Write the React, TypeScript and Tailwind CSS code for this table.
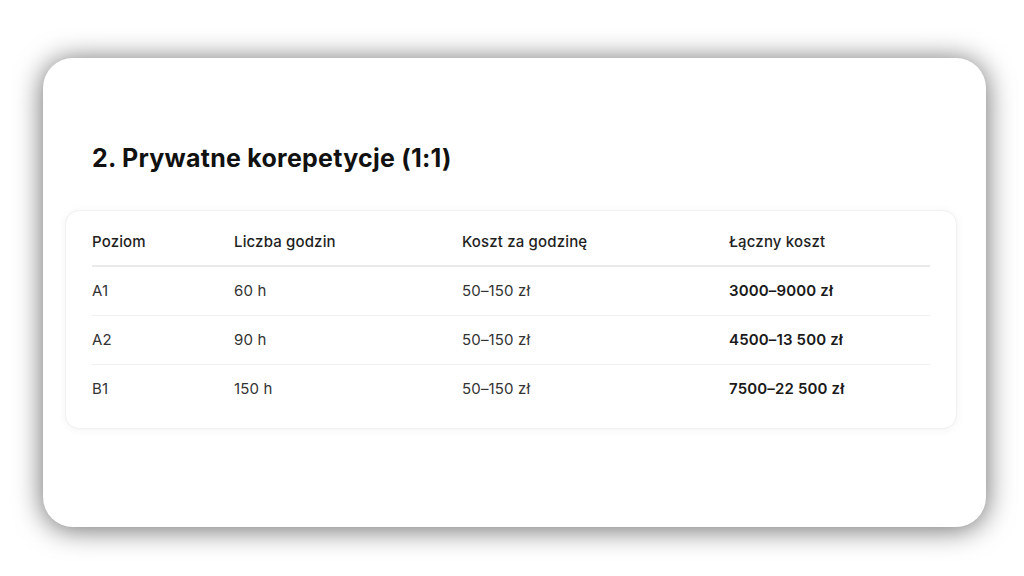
const rows = [
  { level: 'A1', hours: '60 h', rate: '50–150 zł', total: '3000–9000 zł' },
  { level: 'A2', hours: '90 h', rate: '50–150 zł', total: '4500–13 500 zł' },
  { level: 'B1', hours: '150 h', rate: '50–150 zł', total: '7500–22 500 zł' },
];

function PriceTable() {
  return (
    <div className="rounded-[14px] border border-[#f0f0f0] bg-white px-[26px] pt-[11px] pb-[15px] shadow-[0_1px_8px_rgba(0,0,0,0.05)]">
      <table className="w-full border-collapse text-left text-[15px] leading-5 tracking-[0.01em]">
        <thead>
          <tr className="border-b-2 border-[#e9e9e9]">
            <th className="w-[142px] pt-[10px] pb-[13px] font-medium text-[#1f1f1f]">Poziom</th>
            <th className="w-[228px] pt-[10px] pb-[13px] font-medium text-[#1f1f1f]">Liczba godzin</th>
            <th className="w-[267px] pt-[10px] pb-[13px] font-medium text-[#1f1f1f]">Koszt za godzinę</th>
            <th className="pt-[10px] pb-[13px] font-medium text-[#1f1f1f]">Łączny koszt</th>
          </tr>
        </thead>
        <tbody>
          {rows.map((r, i) => (
            <tr key={r.level} className={i < rows.length - 1 ? 'border-b border-[#f0f0f0]' : ''}>
              <td className="py-[14px] text-[#333]">{r.level}</td>
              <td className="py-[14px] text-[#333]">{r.hours}</td>
              <td className="py-[14px] text-[#333]">{r.rate}</td>
              <td className="py-[14px] font-semibold text-[#1a1a1a]">{r.total}</td>
            </tr>
          ))}
        </tbody>
      </table>
    </div>
  );
}

export default function App() {
  return (
    <div className="min-h-screen bg-white pt-[58px] pl-[43px] font-['Inter',sans-serif]">
      <div className="h-[469px] w-[943px] rounded-[30px] bg-white pl-[22px] pr-[29px] pt-[84px] shadow-[0_2px_28px_rgba(0,0,0,0.6)]">
        <h2 className="ml-[27px] text-[25px] leading-8 font-bold tracking-[0.01em] text-[#111]">
          2. Prywatne korepetycje (1:1)
        </h2>
        <div className="mt-[36px]">
          <PriceTable />
        </div>
      </div>
    </div>
  );
}
